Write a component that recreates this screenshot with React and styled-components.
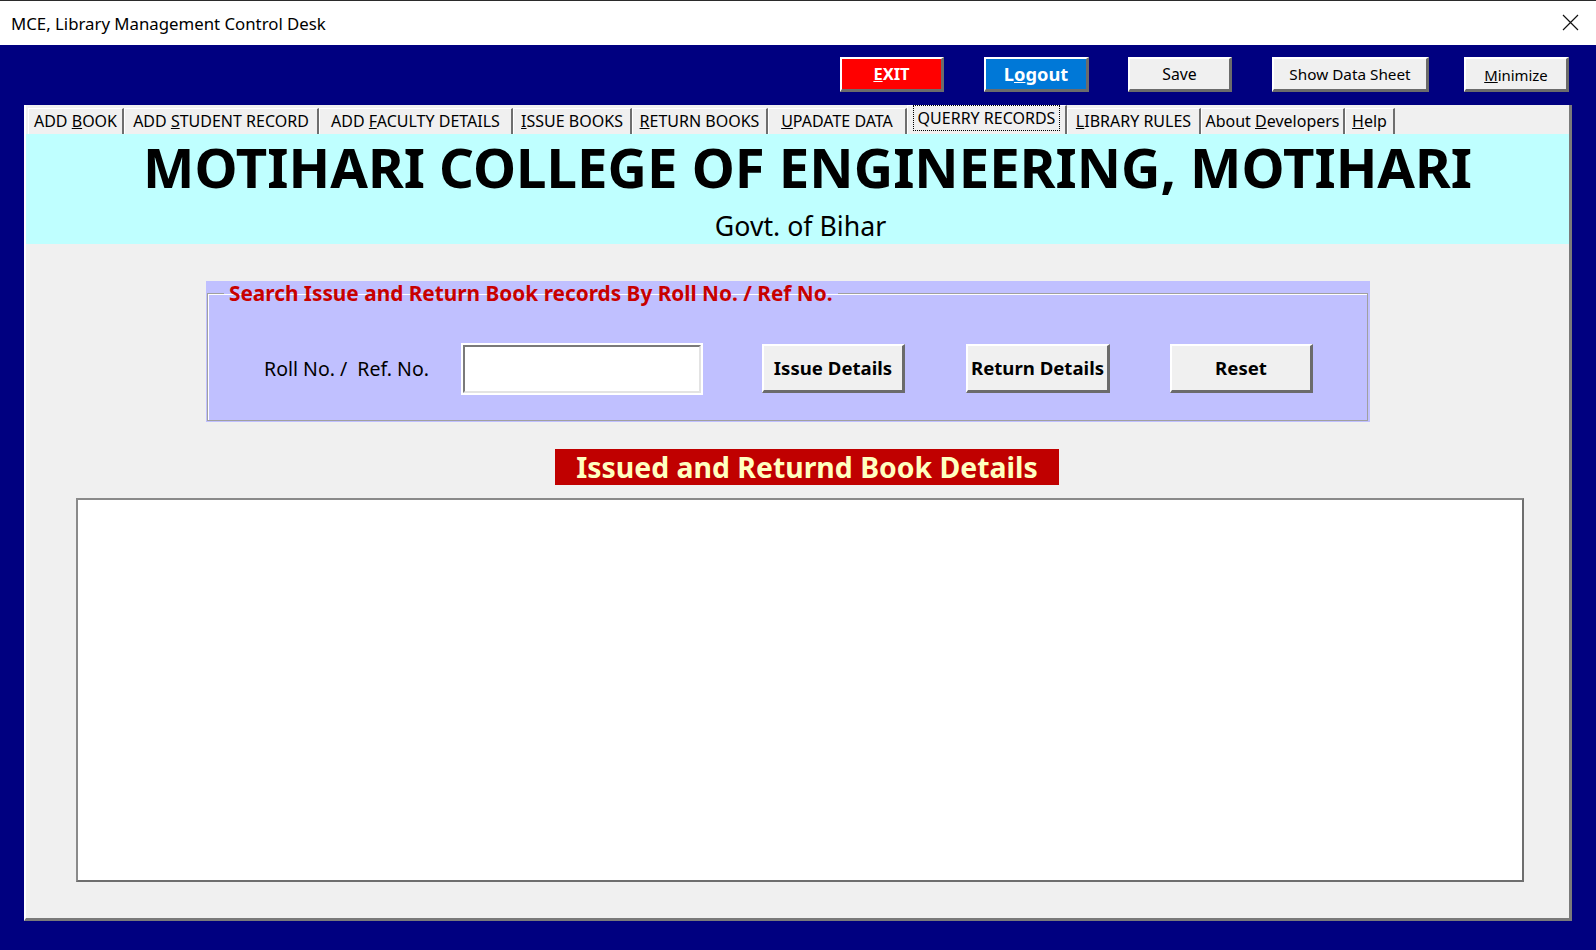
import styled, { createGlobalStyle } from 'styled-components';

const GlobalStyle = createGlobalStyle`
  html, body {
    margin: 0;
    padding: 0;
    background: #000080;
    overflow: hidden;
  }
  body {
    font-family: 'Noto Sans', 'Open Sans', sans-serif;
  }
  * { box-sizing: border-box; }
`;

const Window = styled.div`
  width: 1596px;
  height: 950px;
  display: flex;
  flex-direction: column;
  background: #000080;
`;

const TitleBar = styled.div`
  height: 45px;
  flex: none;
  border-top: 1px solid #2b2b2b;
  background: #fff;
  display: flex;
  align-items: center;
  justify-content: space-between;
  padding: 0 17px 0 11px;
`;

const TitleText = styled.span`
  font-size: 16.8px;
  color: #000;
`;

const CloseIcon = styled.svg`
  width: 17px;
  height: 17px;
  margin-top: -1px;
`;

const Desk = styled.div`
  flex: 1;
  display: flex;
  flex-direction: column;
  padding: 12px 24px 29px 24px;
`;

const ActionBar = styled.div`
  height: 35px;
  flex: none;
  display: flex;
  justify-content: flex-end;
  padding-right: 3px;
  margin-bottom: 13px;
`;

const ClassicButton = styled.button`
  width: ${({ $w }) => $w}px;
  height: ${({ $h }) => $h || 35}px;
  margin-left: ${({ $ml }) => $ml || 0}px;
  padding: ${({ $bold }) => ($bold ? '0' : '2px 0 0 0')};
  background: ${({ $bg }) => $bg || '#f0f0f0'};
  color: ${({ $color }) => $color || '#000'};
  font-family: 'Noto Sans', 'Open Sans', sans-serif;
  font-size: ${({ $size }) => $size || 15.5}px;
  font-weight: ${({ $bold }) => ($bold ? 700 : 400)};
  border-style: solid;
  border-width: 2px 3px 3px 2px;
  border-color: #ffffff #6b6b6b #6b6b6b #ffffff;
  cursor: pointer;
  display: flex;
  align-items: center;
  justify-content: center;
  line-height: 1;
`;

const Panel = styled.div`
  flex: 1;
  display: flex;
  flex-direction: column;
  background: #f0f0f0;
  border-left: 2px solid #ffffff;
  border-right: 3px solid #7a7a7a;
  border-bottom: 3px solid #7a7a7a;
`;

const TabStrip = styled.div`
  height: 29px;
  flex: none;
  display: flex;
  align-items: flex-end;
  padding-left: 2px;
`;

const Tab = styled.div`
  width: ${({ $w }) => $w}px;
  height: ${({ $active }) => ($active ? 29 : 26)}px;
  flex: none;
  display: flex;
  align-items: center;
  justify-content: center;
  padding-bottom: ${({ $active }) => ($active ? 4 : 1)}px;
  border-top: 1px solid #ffffff;
  border-left: 1px solid #ffffff;
  border-right: 2px solid #6e6e6e;
  font-size: 16px;
  line-height: 20px;
  color: #000;
  white-space: nowrap;
`;

const TabLabel = styled.span`
  padding: 0 2px;
  outline: ${({ $focus }) => ($focus ? '1px dotted #000' : 'none')};
  outline-offset: 2px;
`;

const Header = styled.div`
  height: 110px;
  flex: none;
  background: #bfffff;
  display: flex;
  flex-direction: column;
  align-items: center;
  padding-left: 20px;
`;

const CollegeName = styled.h1`
  margin: 5px 0 0 0;
  font-size: 54.5px;
  line-height: 56px;
  font-weight: 700;
  color: #000;
  white-space: nowrap;
`;

const SubTitle = styled.div`
  margin-top: 17px;
  font-size: 26.7px;
  line-height: 28px;
  margin-left: -14px;
  color: #000;
`;

const Content = styled.div`
  flex: 1;
  display: flex;
  flex-direction: column;
  align-items: flex-start;
`;

const SearchFrame = styled.div`
  margin: 37px 0 0 180px;
  width: 1164px;
  height: 141px;
  background: #c0c0ff;
  padding: 0 2px 1px 1px;
`;

const GroupBox = styled.fieldset`
  margin: 0;
  height: 100%;
  padding: 0 0 0 56px;
  border: 1px solid #a0a0a0;
  box-shadow: inset 1px 1px 0 #ffffff;
  display: flex;
  align-items: center;
`;

const GroupLegend = styled.legend`
  margin-left: -40px;
  padding: 0 5px;
  font-size: 20.8px;
  line-height: 24px;
  font-weight: 700;
  color: #c80000;
`;

const SearchRow = styled.div`
  display: flex;
  align-items: center;
  margin-top: 12px;
`;

const FieldLabel = styled.label`
  width: 199px;
  font-size: 19.5px;
  color: #000;
  white-space: pre;
`;

const TextInput = styled.input`
  width: 238px;
  height: 48px;
  background: #fff;
  border-style: solid;
  border-width: 2px;
  border-color: #7a7a7a #e3e3e3 #e3e3e3 #7a7a7a;
  outline: 2px solid #ffffff;
  outline-offset: 0;
  font-size: 16px;
  padding: 0 6px;
`;

const Banner = styled.div`
  margin: 27px 0 0 529px;
  width: 504px;
  height: 36px;
  background: #c00000;
  color: #ffffc0;
  font-size: 28.4px;
  font-weight: 700;
  display: flex;
  align-items: center;
  justify-content: center;
  line-height: 1;
`;

const ListBox = styled.div`
  margin: 13px 0 0 50px;
  width: 1448px;
  height: 384px;
  background: #fff;
  border-style: solid;
  border-width: 2px 2px 2px 2px;
  border-color: #8a8a8a #6e6e6e #6e6e6e #8a8a8a;
`;

const topButtons = [
  { label: 'EXIT', key: 0, w: 104, ml: 0, bg: '#ff0000', color: '#fff', bold: true, size: 16.5 },
  { label: 'Logout', key: 1, w: 105, ml: 40, bg: '#0078d7', color: '#fff', bold: true, size: 18.3 },
  { label: 'Save', key: -1, w: 104, ml: 39, size: 15.8 },
  { label: 'Show Data Sheet', key: -1, w: 157, ml: 40, size: 15.3 },
  { label: 'Minimize', key: 0, w: 105, ml: 35, size: 14.9 },
];

const tabs = [
  { label: 'ADD BOOK', key: 4, w: 96 },
  { label: 'ADD STUDENT RECORD', key: 4, w: 195 },
  { label: 'ADD FACULTY DETAILS', key: 4, w: 194 },
  { label: 'ISSUE BOOKS', key: 0, w: 119 },
  { label: 'RETURN BOOKS', key: 0, w: 136 },
  { label: 'UPADATE DATA', key: 0, w: 139 },
  { label: 'QUERRY RECORDS', key: -1, w: 160, active: true },
  { label: 'LIBRARY RULES', key: 0, w: 134 },
  { label: 'About Developers', key: 6, w: 144 },
  { label: 'Help', key: 0, w: 50 },
];

function AccessKey({ text, at }) {
  if (at < 0) return text;
  return (
    <>
      {text.slice(0, at)}
      <u>{text[at]}</u>
      {text.slice(at + 1)}
    </>
  );
}

export default function App() {
  return (
    <Window>
      <GlobalStyle />
      <TitleBar>
        <TitleText>MCE, Library Management Control Desk</TitleText>
        <CloseIcon viewBox="0 0 17 17">
          <path d="M1 1 L16 16 M16 1 L1 16" stroke="#111" strokeWidth="1.2" fill="none" />
        </CloseIcon>
      </TitleBar>
      <Desk>
        <ActionBar>
          {topButtons.map((b) => (
            <ClassicButton
              key={b.label}
              $w={b.w}
              $ml={b.ml}
              $bg={b.bg}
              $color={b.color}
              $bold={b.bold}
              $size={b.size}
            >
              <AccessKey text={b.label} at={b.key} />
            </ClassicButton>
          ))}
        </ActionBar>
        <Panel>
          <TabStrip>
            {tabs.map((t) => (
              <Tab key={t.label} $w={t.w} $active={t.active}>
                <TabLabel $focus={t.active}>
                  <AccessKey text={t.label} at={t.key} />
                </TabLabel>
              </Tab>
            ))}
          </TabStrip>
          <Header>
            <CollegeName>MOTIHARI COLLEGE OF ENGINEERING, MOTIHARI</CollegeName>
            <SubTitle>Govt. of Bihar</SubTitle>
          </Header>
          <Content>
            <SearchFrame>
              <GroupBox>
                <GroupLegend>Search Issue and Return Book records By Roll No. / Ref No.</GroupLegend>
                <SearchRow>
                  <FieldLabel>Roll No. /  Ref. No.</FieldLabel>
                  <TextInput type="text" />
                  <ClassicButton $w={143} $h={49} $ml={61} $bold $size={18.6}>
                    Issue Details
                  </ClassicButton>
                  <ClassicButton $w={144} $h={49} $ml={61} $bold $size={18.6}>
                    Return Details
                  </ClassicButton>
                  <ClassicButton $w={143} $h={49} $ml={60} $bold $size={18.6}>
                    Reset
                  </ClassicButton>
                </SearchRow>
              </GroupBox>
            </SearchFrame>
            <Banner>Issued and Returnd Book Details</Banner>
            <ListBox />
          </Content>
        </Panel>
      </Desk>
    </Window>
  );
}
